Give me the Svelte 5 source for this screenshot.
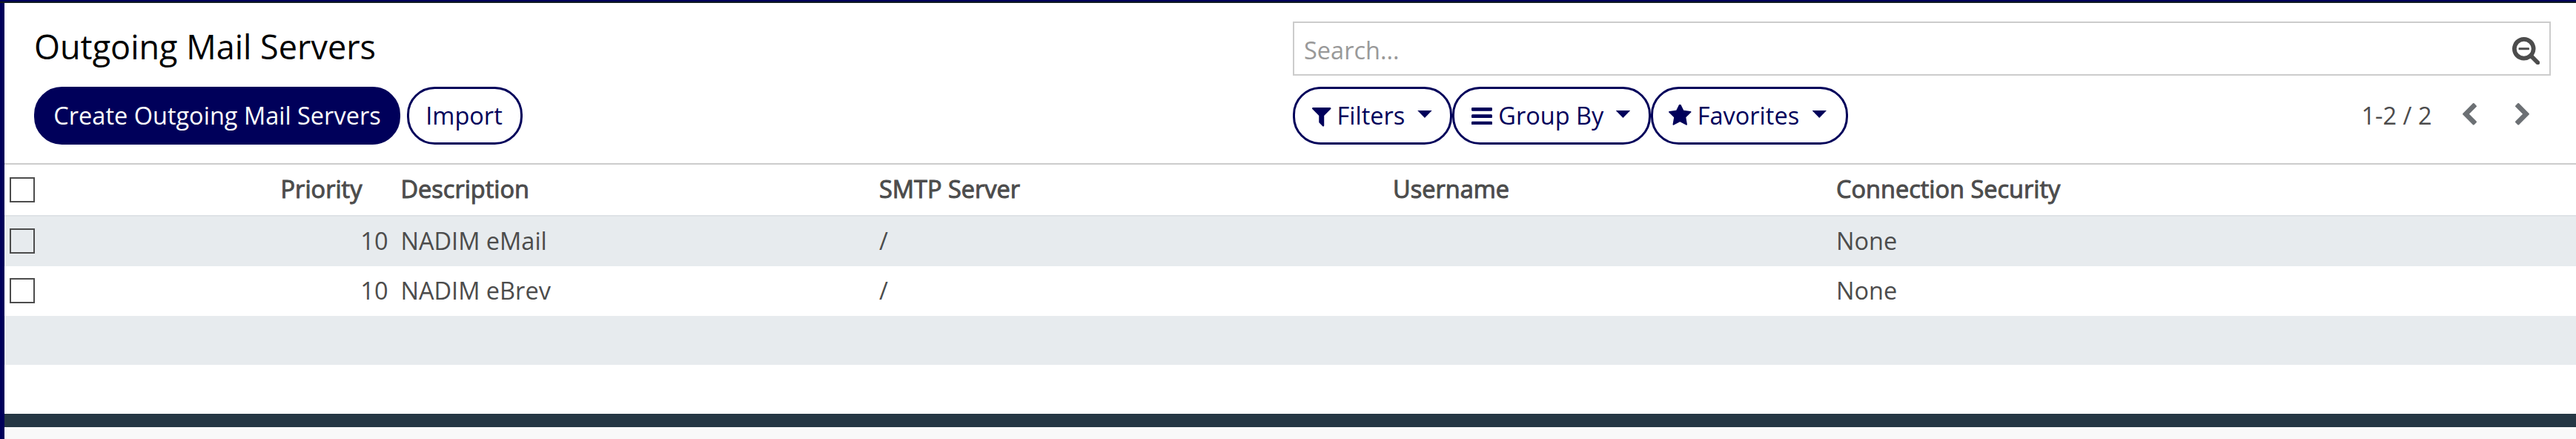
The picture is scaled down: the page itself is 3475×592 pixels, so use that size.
<script>
  const menus = [
    {
      label: 'Filters', width: 214.5, pad: 23, gap: 8, end: 23.8, icon: [25.5, 25.5], box: '192 256 1408 1408', drop: 0,
      path: 'M1595 295q17 41-14 70l-493 493v742q0 42-39 59-13 5-25 5-27 0-45-19l-256-256q-19-19-19-45v-486l-493-493q-31-29-14-70 17-39 59-39h1280q42 0 59 39z'
    },
    {
      label: 'Group By', width: 268, pad: 23, gap: 8.8, end: 24.3, icon: [28, 23.3], box: '128 256 1536 1280', drop: 0,
      path: 'M1664 1344v128q0 26-19 45t-45 19h-1408q-26 0-45-19t-19-45v-128q0-26 19-45t45-19h1408q26 0 45 19t19 45zm0-512v128q0 26-19 45t-45 19h-1408q-26 0-45-19t-19-45v-128q0-26 19-45t45-19h1408q26 0 45 19t19 45zm0-512v128q0 26-19 45t-45 19h-1408q-26 0-45-19t-19-45v-128q0-26 19-45t45-19h1408q26 0 45 19t19 45z'
    },
    {
      label: 'Favorites', width: 266.5, pad: 21.7, gap: 8, end: 26, icon: [30.5, 29], box: '64 103 1664 1587', drop: -4,
      path: 'M1728 647q0 22-26 48l-363 354 86 500q1 7 1 20 0 21-10.5 35.5t-30.5 14.5q-19 0-40-12l-449-236-449 236q-22 12-40 12-21 0-31.5-14.5t-10.5-35.5q0-6 2-20l86-500-364-354q-25-27-25-48 0-37 56-46l502-73 225-455q19-41 49-41t49 41l225 455 502 73q56 9 56 46z'
    }
  ];
  const servers = [
    { priority: 10, description: 'NADIM eMail', host: '/', user: '', security: 'None' },
    { priority: 10, description: 'NADIM eBrev', host: '/', user: '', security: 'None' }
  ];
</script>

<div class="app">
  <div class="topbar"></div>
  <div class="body">
    <header class="panel">
      <div class="left">
        <h1>Outgoing Mail Servers</h1>
        <div class="buttons">
          <button class="btn primary">Create Outgoing Mail Servers</button>
          <button class="btn import">Import</button>
        </div>
      </div>
      <div class="right">
        <div class="search">
          <span>Search...</span>
          <svg width="37.3" height="37.3" viewBox="64 128 1664 1664"><path d="M1088 800v64q0 13-9.5 22.5t-22.5 9.5h-576q-13 0-22.5-9.5t-9.5-22.5v-64q0-13 9.5-22.5t22.5-9.5h576q13 0 22.5 9.5t9.5 22.5zm128 32q0-185-131.5-316.5t-316.5-131.5-316.5 131.5-131.5 316.5 131.5 316.5 316.5 131.5 316.5-131.5 131.5-316.5zm512 832q0 53-37.5 90.5t-90.5 37.5q-54 0-90-38l-343-342q-179 124-399 124-143 0-273.5-55.5t-225-150-150-225-55.5-273.5 55.5-273.5 150-225 225-150 273.5-55.5 273.5 55.5 225 150 150 225 55.5 273.5q0 220-124 399l343 343q37 37 37 90z" /></svg>
        </div>
        <div class="tools">
          <div class="menus">
            {#each menus as m}
              <button class="btn menu" style="width: {m.width}px; padding: 0 {m.end}px 0 {m.pad}px">
                <svg width={m.icon[0]} height={m.icon[1]} viewBox={m.box} style="margin: {25 + m.drop}px {m.gap}px 0 0"><path d={m.path} /></svg>
                <span>{m.label}</span>
                <i class="caret"></i>
              </button>
            {/each}
          </div>
          <div class="pager">
            <span>1-2 / 2</span>
            <svg width="19" height="29.6" viewBox="410 26 1036 1612"><path d="M1427 301l-531 531 531 531q19 19 19 45t-19 45l-166 166q-19 19-45 19t-45-19l-742-742q-19-19-19-45t19-45l742-742q19-19 45-19t45 19l166 166q19 19 19 45t-19 45z" /></svg>
            <svg width="19" height="29.6" viewBox="346 26 1036 1612"><path d="M1363 877l-742 742q-19 19-45 19t-45-19l-166-166q-19-19-19-45t19-45l531-531-531-531q-19-19-19-45t19-45l166-166q19-19 45-19t45 19l742 742q19 19 19 45t-19 45z" /></svg>
          </div>
        </div>
      </div>
    </header>

    <div class="row head">
      <i class="check"></i>
      <span class="num">Priority</span>
      <span>Description</span>
      <span>SMTP Server</span>
      <span>Username</span>
      <span>Connection Security</span>
    </div>
    {#each servers as s, i}
      <div class="row" class:shade={i % 2 === 0}>
        <i class="check"></i>
        <span class="num">{s.priority}</span>
        <span>{s.description}</span>
        <span>{s.host}</span>
        <span>{s.user}</span>
        <span>{s.security}</span>
      </div>
    {/each}
    <div class="blank shade"></div>
    <div class="blank"></div>
    <div class="divider"></div>
    <div class="footer"></div>
  </div>
</div>

<style>
  .app {
    box-sizing: border-box;
    width: 3475px;
    height: 592px;
    overflow: hidden;
    display: flex;
    flex-direction: column;
    background: #fff;
    color: #4c4c4c;
    font: 32.5px/45px 'Open Sans', sans-serif;
    white-space: nowrap;
  }
  .app :global(*) { box-sizing: border-box; }
  svg { display: block; flex: none; fill: currentColor; }
  .topbar { height: 4px; background: #00005a; border-bottom: 2px solid #101a20; flex: none; }
  .body { flex: 1; border-left: 6px solid #00005a; display: flex; flex-direction: column; }
  .panel {
    height: 218px;
    flex: none;
    display: grid;
    grid-template-columns: 1698px 1697px;
    padding: 25px 0 0 40px;
    border-bottom: 2px solid #ccc;
  }
  h1 { margin: 0; padding-top: 3px; height: 88px; font-size: 45px; line-height: 61px; font-weight: 400; color: #000; }
  .buttons { display: flex; gap: 9px; }
  .btn {
    height: 78px;
    margin: 0;
    padding: 0 0 1px;
    border: 3px solid #00005a;
    border-radius: 37.5px;
    background: #fff;
    color: #00005a;
    font: inherit;
  }
  .primary { width: 494px; background: #00005a; color: #fff; }
  .import { width: 156px; padding-right: 2px; }
  .search {
    height: 73px;
    border: 2px solid #ccc;
    display: flex;
    justify-content: space-between;
    padding: 14px 13px 0 13px;
    color: #999;
  }
  .search svg { color: #4c4c4c; margin-top: 4.5px; }
  .tools { display: flex; justify-content: space-between; margin-top: 15px; }
  .menus { display: flex; }
  .menu { display: flex; align-items: flex-start; }
  .menu span { padding-top: 13px; }
  .caret {
    width: 19.5px;
    height: 10px;
    margin: 29px 0 0 auto;
    background: #00005a;
    clip-path: polygon(0 0, 100% 0, 50% 100%);
  }
  .pager { display: flex; align-items: flex-start; padding-right: 29px; }
  .pager span { padding-top: 16px; margin-right: 41px; }
  .pager svg { margin-top: 22px; color: #6c7074; }
  .pager svg + svg { margin-left: 52.5px; }
  .row {
    height: 67px;
    flex: none;
    display: grid;
    grid-template-columns: 70px 448px 645.5px 693px 598px 1fr;
    padding: 10px 0 0 7px;
  }
  .row span:nth-of-type(n + 2) { padding-left: 9.5px; }
  .row .num { text-align: right; padding-right: 7.5px; }
  .head { height: 70px; border-bottom: 2px solid #dee2e6; -webkit-text-stroke: 1px #4c4c4c; }
  .head .num { padding-right: 42.5px; }
  .check { width: 34px; height: 34px; margin-top: 6px; border: 2px solid #4c4c4c; }
  .head .check { margin-top: 7px; }
  .shade { background: #e7ebee; }
  .blank { height: 66px; flex: none; }
  .divider { height: 18px; flex: none; background: #253744; }
  .footer { flex: 1; background: #f9f9f9; }
</style>
